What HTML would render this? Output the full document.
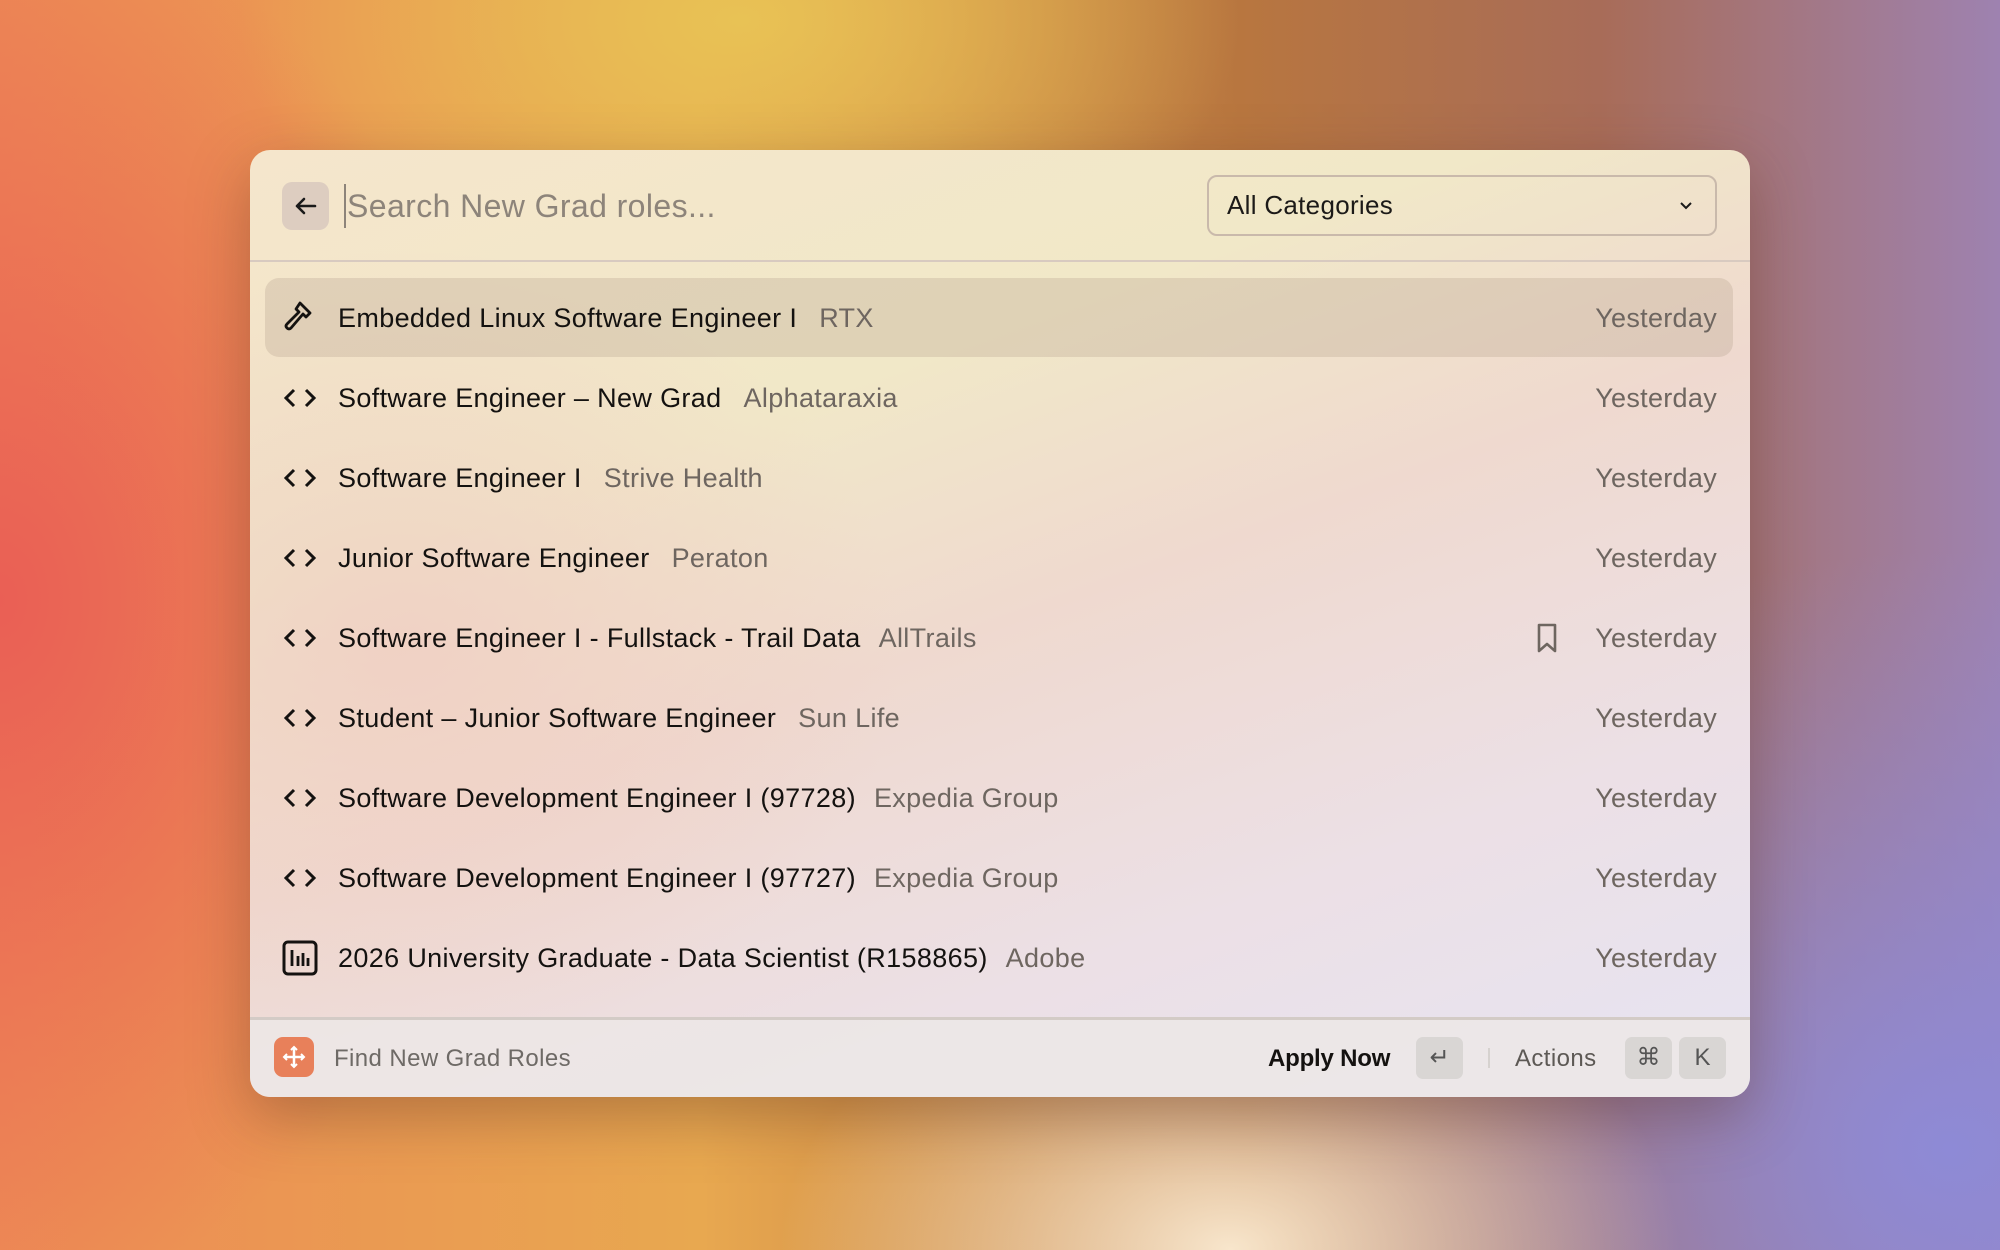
<!DOCTYPE html>
<html><head><meta charset="utf-8"><style>
*{margin:0;padding:0;box-sizing:border-box}
body{width:2000px;height:1250px;overflow:hidden;position:relative;font-family:"Liberation Sans",sans-serif;
background:
radial-gradient(ellipse 500px 300px at 740px 20px,#e8c255 0%,rgba(232,194,85,0) 100%),
radial-gradient(ellipse 450px 300px at 1230px 1250px,#f8e6cc 0%,rgba(248,230,204,0) 100%),
radial-gradient(ellipse 700px 600px at 1950px 1150px,#8e8ad6 0%,rgba(142,138,214,0) 100%),
radial-gradient(ellipse 500px 700px at 0px 600px,#ea5f55 0%,rgba(234,95,85,0) 100%),
linear-gradient(90deg,#ed8a55 0%,#e8a850 35%,#b8763f 62%,#a86c58 80%,#9e82b0 100%);}
.panel{position:absolute;left:250px;top:150px;width:1500px;height:947px;border-radius:20px;overflow:hidden;
background:linear-gradient(160deg,#f5e6cc 0%,#f1e8c8 30%,#efd9cf 50%,#ece0e6 75%,#e6e4f2 100%);
box-shadow:0 20px 60px rgba(80,40,30,.35);}
.panel:before{content:"";position:absolute;inset:0;background:radial-gradient(ellipse 500px 400px at 150px 500px,rgba(240,205,195,.8),rgba(240,205,195,0));}
.a{position:absolute}
.back{left:32px;top:32px;width:47px;height:48px;border-radius:10px;background:#ddcdc0}
.search{left:97px;top:36px;font-size:32px;color:#8d847a;line-height:40px;letter-spacing:.4px}
.caret{left:94px;top:34px;width:2px;height:44px;background:#8d847a}
.dd{left:957px;top:25px;width:510px;height:61px;border:2px solid #c9b9ab;border-radius:10px;font-size:26px;color:#1c1a18;padding-left:18px;line-height:57px;letter-spacing:.3px}
.hr{left:0;width:1500px;height:2px;background:#d8cac0}
.sel{left:15px;top:128px;width:1468px;height:79px;border-radius:14px;background:rgba(190,170,150,.35)}
.row{position:absolute;left:0;width:1500px;height:80px}
.row .t{position:absolute;left:88px;top:0;line-height:80px;font-size:27px;color:#141210;white-space:nowrap;letter-spacing:.35px}
.row .t span{color:#6e6660;margin-left:22px}
.row .y{position:absolute;right:33px;top:0;line-height:80px;font-size:27px;color:#6e6660;letter-spacing:.3px}
.row svg{position:absolute;left:32px;top:22px}
.ft{font-size:24px;line-height:40px;letter-spacing:.4px}
.key{position:absolute;top:887px;width:47px;height:42px;border-radius:7px;background:#d9d6d4;color:#555;font-size:24px;text-align:center;line-height:42px}
</style></head><body>
<div class="panel">
<div class="a back"><svg width="47" height="48" viewBox="0 0 47 48"><path d="M33 24H15M22 17l-7 7 7 7" stroke="#1a1a1a" stroke-width="2.6" fill="none" stroke-linecap="round" stroke-linejoin="round"/></svg></div>
<div class="a caret"></div>
<div class="a search">Search New Grad roles...</div>
<div class="a dd">All Categories<svg style="position:absolute;right:22px;top:24px" width="14" height="10" viewBox="0 0 14 10"><path d="M2 2l5 5 5-5" stroke="#1a1a1a" stroke-width="2" fill="none"/></svg></div>
<div class="a hr" style="top:110px"></div>
<div class="a sel"></div>

<div class="row" style="top:128px"><svg width="36" height="36" viewBox="0 0 36 36"><path d="M18 3l10 10-4 4-3-3L9 28q-2 2-4 0t0-4L17 12l-3-3z" stroke="#141210" stroke-width="2.8" fill="none" stroke-linejoin="round"/></svg><div class="t">Embedded Linux Software Engineer I<span>RTX</span></div><div class="y">Yesterday</div></div>
<div class="row" style="top:208px"><svg width="36" height="36" viewBox="0 0 36 36"><path d="M12 10l-8 8 8 8M24 10l8 8-8 8" stroke="#141210" stroke-width="3" fill="none"/></svg><div class="t">Software Engineer – New Grad<span>Alphataraxia</span></div><div class="y">Yesterday</div></div>
<div class="row" style="top:288px"><svg width="36" height="36" viewBox="0 0 36 36"><path d="M12 10l-8 8 8 8M24 10l8 8-8 8" stroke="#141210" stroke-width="3" fill="none"/></svg><div class="t">Software Engineer I<span>Strive Health</span></div><div class="y">Yesterday</div></div>
<div class="row" style="top:368px"><svg width="36" height="36" viewBox="0 0 36 36"><path d="M12 10l-8 8 8 8M24 10l8 8-8 8" stroke="#141210" stroke-width="3" fill="none"/></svg><div class="t">Junior Software Engineer<span>Peraton</span></div><div class="y">Yesterday</div></div>
<div class="row" style="top:448px"><svg width="36" height="36" viewBox="0 0 36 36"><path d="M12 10l-8 8 8 8M24 10l8 8-8 8" stroke="#141210" stroke-width="3" fill="none"/></svg><div class="t">Software Engineer I - Fullstack - Trail Data<span style="margin-left:18px">AllTrails</span></div>
<svg style="left:1285px;top:24px" width="24" height="32" viewBox="0 0 24 32"><path d="M4 3h16v26l-8-7-8 7z" stroke="#6e6660" stroke-width="2.6" fill="none" stroke-linejoin="round"/></svg><div class="y">Yesterday</div></div>
<div class="row" style="top:528px"><svg width="36" height="36" viewBox="0 0 36 36"><path d="M12 10l-8 8 8 8M24 10l8 8-8 8" stroke="#141210" stroke-width="3" fill="none"/></svg><div class="t">Student – Junior Software Engineer<span>Sun Life</span></div><div class="y">Yesterday</div></div>
<div class="row" style="top:608px"><svg width="36" height="36" viewBox="0 0 36 36"><path d="M12 10l-8 8 8 8M24 10l8 8-8 8" stroke="#141210" stroke-width="3" fill="none"/></svg><div class="t">Software Development Engineer I (97728)<span style="margin-left:18px">Expedia Group</span></div><div class="y">Yesterday</div></div>
<div class="row" style="top:688px"><svg width="36" height="36" viewBox="0 0 36 36"><path d="M12 10l-8 8 8 8M24 10l8 8-8 8" stroke="#141210" stroke-width="3" fill="none"/></svg><div class="t">Software Development Engineer I (97727)<span style="margin-left:18px">Expedia Group</span></div><div class="y">Yesterday</div></div>
<div class="row" style="top:768px"><svg width="36" height="36" viewBox="0 0 36 36"><rect x="2" y="2" width="32" height="32" rx="4" stroke="#141210" stroke-width="3" fill="none"/><path d="M10 10v16M16 16v10M21 13v13M26 18v8" stroke="#141210" stroke-width="2.8"/></svg><div class="t">2026 University Graduate - Data Scientist (R158865)<span style="margin-left:18px">Adobe</span></div><div class="y">Yesterday</div></div>

<div class="a hr" style="top:867px;height:3px;background:#d3cbc6"></div>
<div class="a" style="left:0;top:870px;width:1500px;height:77px;background:rgba(236,232,230,.85)"></div>
<div class="a" style="left:24px;top:887px;width:40px;height:40px;border-radius:9px;background:#e8805a"><svg width="40" height="40" viewBox="0 0 40 40"><path d="M20 10v20M10 20h20" stroke="#fff" stroke-width="2.5"/><path d="M17 13l3-3 3 3M17 27l3 3 3-3M13 17l-3 3 3 3M27 17l3 3-3 3" stroke="#fff" stroke-width="2" fill="none"/></svg></div>
<div class="a ft" style="left:84px;top:889px;color:#6e6a66">Find New Grad Roles</div>
<div class="a ft" style="left:1018px;top:889px;color:#141210;font-weight:bold;letter-spacing:-.2px">Apply Now</div>
<div class="key" style="left:1166px">↵</div>
<div class="a" style="left:1238px;top:898px;width:2px;height:20px;background:#d6d2cf"></div>
<div class="a ft" style="left:1265px;top:889px;color:#5d5955">Actions</div>
<div class="key" style="left:1375px">⌘</div>
<div class="key" style="left:1429px">K</div>
</div>
</body></html>
